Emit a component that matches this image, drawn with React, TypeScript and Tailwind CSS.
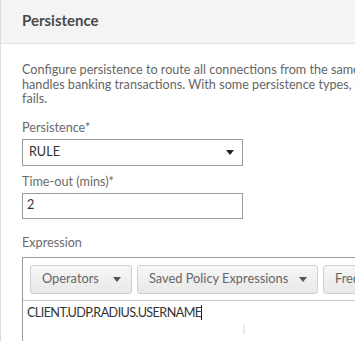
import React from 'react';

const Caret = ({ className }: { className?: string }) => (
  <svg width="8" height="5" viewBox="0 0 8 5" className={className}>
    <path d="M0 0h8L4 5z" fill="currentColor" />
  </svg>
);

const ToolButton = ({ label, width }: { label: string; width: string }) => (
  <div
    className={`${width} h-[29px] shrink-0 flex items-center justify-between pl-[11px] pr-[10px] rounded-[3px] border border-[#cfcfcf] bg-gradient-to-b from-[#f7f7f7] to-[#e8e8e8] text-[#666] text-[12.8px] whitespace-nowrap overflow-hidden`}
  >
    <span>{label}</span>
    <Caret className="text-[#555] shrink-0" />
  </div>
);

const App: React.FC = () => {
  return (
    <div
      className="w-[355px] h-[341px] overflow-hidden bg-white border-l border-[#dcdcdc]"
      style={{ fontFamily: 'Lato, "Open Sans", sans-serif' }}
    >
      <div className="h-[44px] bg-[#f4f4f4] border-b border-[#e2e2e2] flex items-center pl-[21px]">
        <h2 className="text-[15px] font-bold text-[#4a4a4a] pb-[3px]">Persistence</h2>
      </div>

      <div className="pl-[21px] pt-[19px]">
        <p className="text-[12.65px] leading-[14.5px] text-[#666] whitespace-nowrap">
          Configure persistence to route all connections from the same user to the same server. For example, if a server
          <br />
          handles banking transactions. With some persistence types, you can also configure a backup persistence type, which is used if the primary persistence type
          <br />
          fails.
        </p>

        <div className="mt-[13px] text-[12.65px] text-[#6b6b6b] leading-[16px]">Persistence*</div>
        <div className="mt-[3px] w-[221px] h-[27px] border border-[#9a9a9a] flex items-center justify-between pl-[6px] pr-[8px] text-[12.65px] text-[#333]">
          <span>RULE</span>
          <Caret className="text-[#222]" />
        </div>

        <div className="mt-[8px] text-[12.65px] text-[#6b6b6b] leading-[16px]">Time-out (mins)*</div>
        <div className="mt-[3px] w-[221px] h-[26px] border border-[#9a9a9a] flex items-center pl-[4px] text-[12.65px] text-[#333]">
          2
        </div>

        <div className="mt-[16px] text-[12.65px] text-[#6b6b6b] leading-[16px]">Expression</div>
        <div className="mt-[6px] w-[400px] border border-[#9a9a9a]">
          <div className="flex gap-[5px] pl-[7px] pt-[7px] pb-[6px] border-b border-[#c8c8c8]">
            <ToolButton label="Operators" width="w-[102px]" />
            <ToolButton label="Saved Policy Expressions" width="w-[181px]" />
            <ToolButton label="Frequently Used Expressions" width="w-[200px]" />
          </div>
          <div className="relative h-[60px] pl-[4px] pt-[3px] leading-[18px] text-[12.65px] text-[#333]">
            <span className="tracking-[-0.6px]">CLIENT.UDP.RADIUS.USERNAME</span>
            <span className="inline-block w-px h-[15px] bg-[#222] align-middle -mt-[2px]" />
            <span className="absolute left-[219px] top-[19px] text-[#ccc] text-[14px] font-light">I</span>
          </div>
        </div>
      </div>
    </div>
  );
};

export default App;
